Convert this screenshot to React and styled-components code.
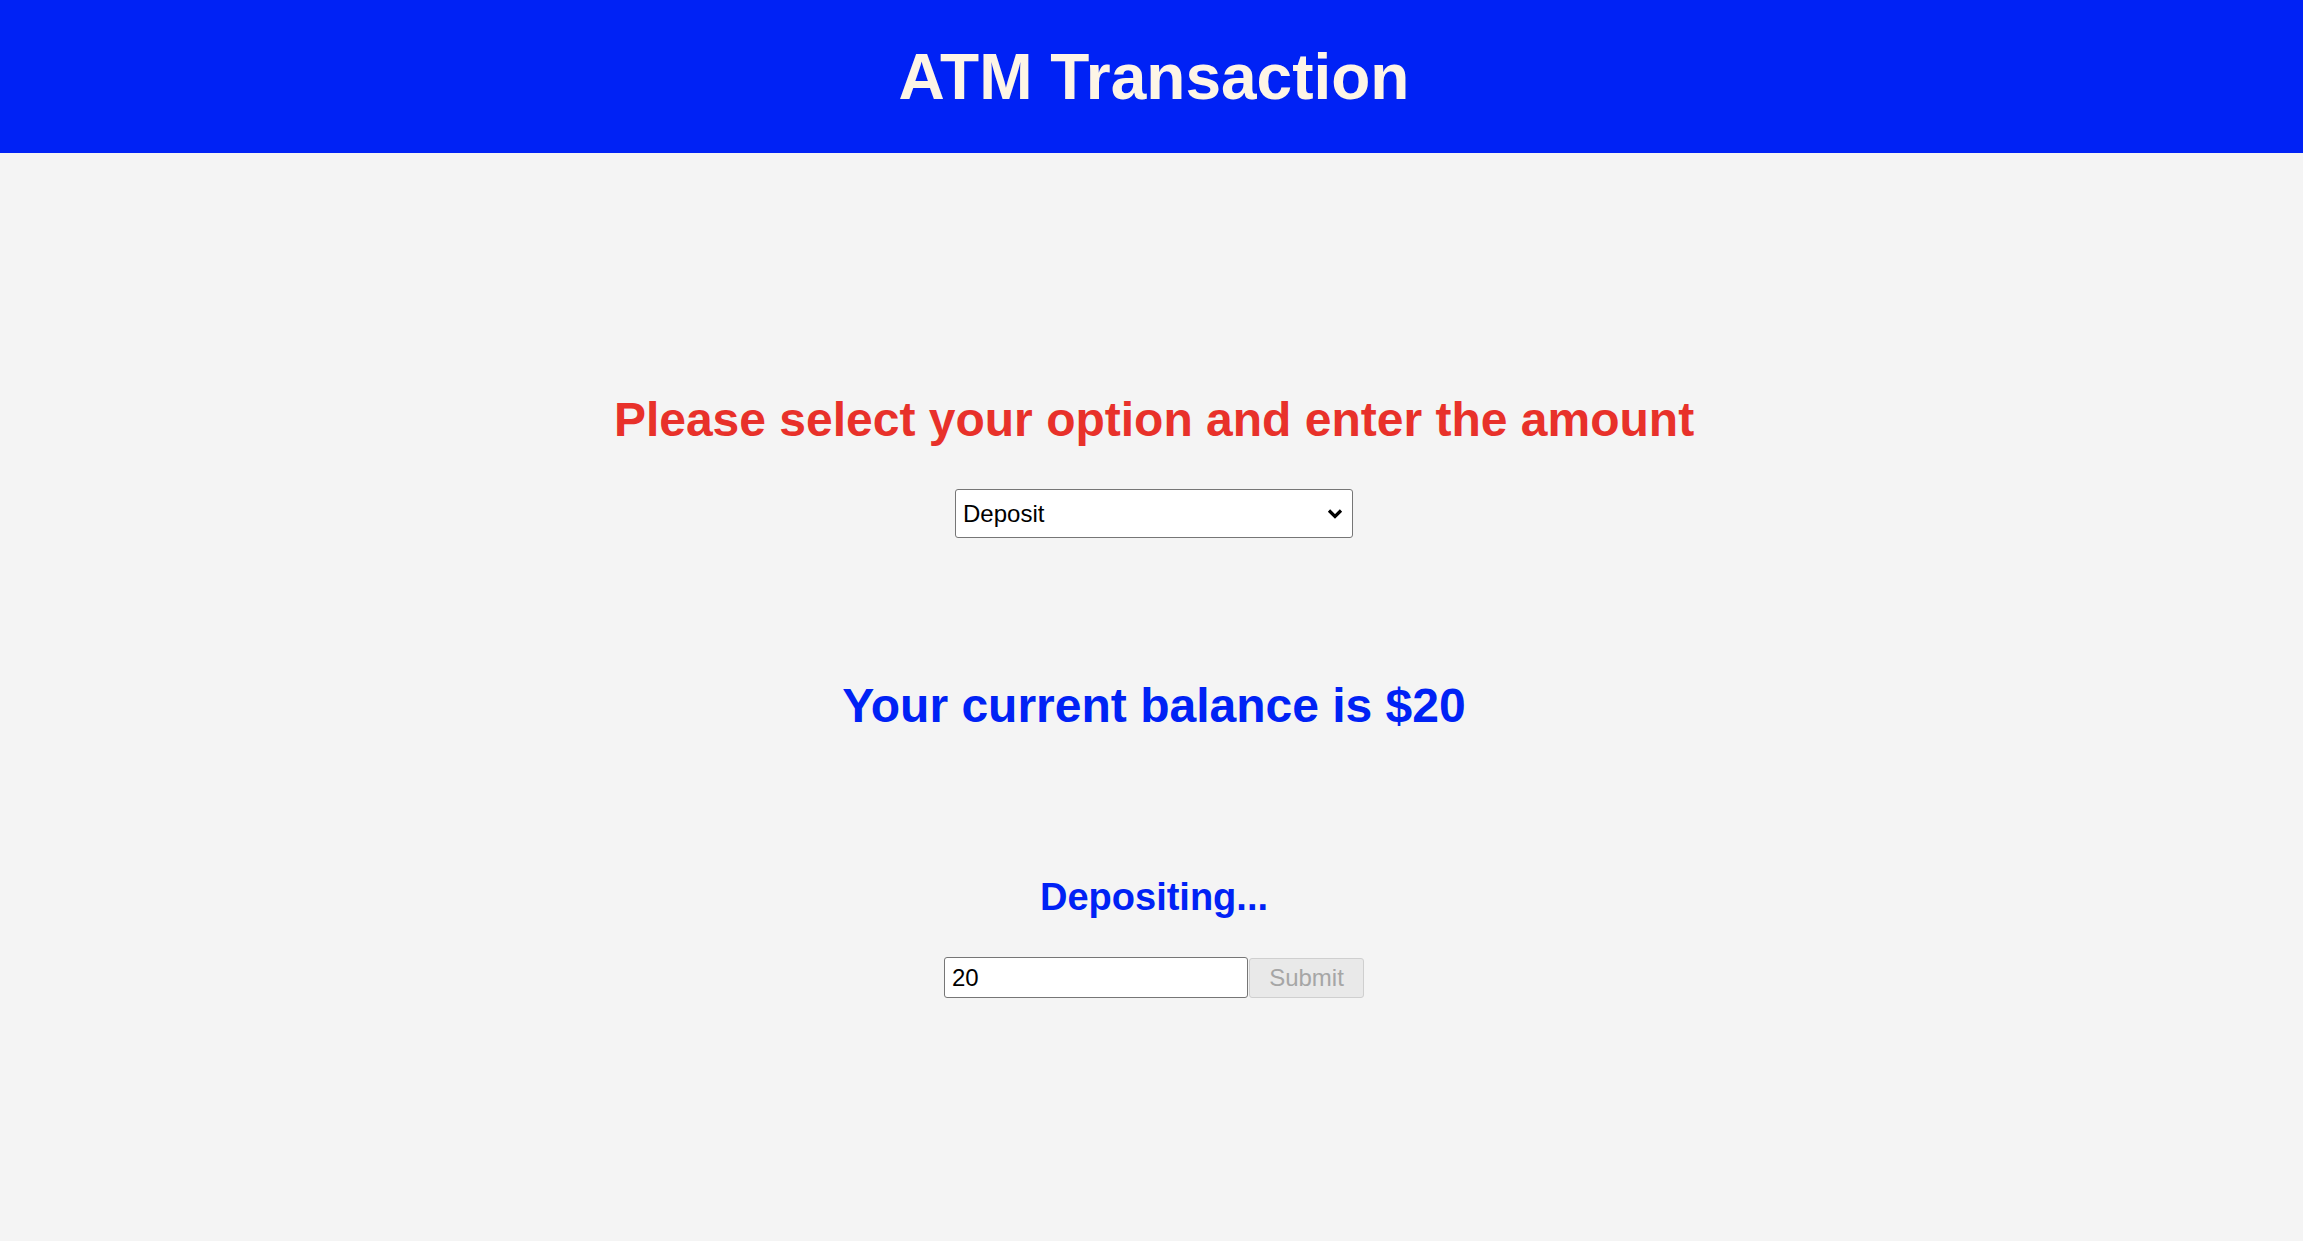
import React from 'react'
import styled, { createGlobalStyle } from 'styled-components'

const GlobalStyle = createGlobalStyle`
  html, body {
    margin: 0;
    padding: 0;
    background: #f4f4f4;
    font-family: "Liberation Sans", Arial, sans-serif;
  }
`

const Page = styled.div`
  min-height: 1241px;
  display: flex;
  flex-direction: column;
  background: #f4f4f4;
`

const Header = styled.header`
  height: 153px;
  padding-left: 5px;
  background: #0022f5;
  display: flex;
  align-items: center;
  justify-content: center;

  h1 {
    margin: 0;
    font-size: 64px;
    line-height: 1;
    font-weight: 700;
    color: #fdf5e6;
  }
`

const Main = styled.main`
  display: flex;
  flex-direction: column;
  align-items: center;
  padding: 243px 0 0 5px;
`

const Heading = styled.h1`
  margin: 0 0 ${p => p.$gap || 0}px;
  font-size: ${p => p.$size || 48}px;
  line-height: 1;
  font-weight: 700;
  color: ${p => p.$color};
`

const SelectWrap = styled.div`
  position: relative;
  width: 398px;
  height: 49px;
  margin-bottom: 144px;

  svg {
    position: absolute;
    right: 10px;
    top: 50%;
    transform: translateY(-50%);
    pointer-events: none;
  }
`

const Select = styled.select`
  box-sizing: border-box;
  width: 100%;
  height: 100%;
  appearance: none;
  -webkit-appearance: none;
  padding: 0 30px 0 7px;
  font-family: "Liberation Sans", Arial, sans-serif;
  font-size: 24px;
  color: #000;
  background: #fff;
  border: 1.5px solid #767676;
  border-radius: 3px;
`

const Row = styled.div`
  display: flex;
  align-items: center;
  gap: 1px;
`

const AmountInput = styled.input`
  box-sizing: border-box;
  width: 304px;
  height: 41px;
  padding: 0 7px;
  font-family: "Liberation Sans", Arial, sans-serif;
  font-size: 24px;
  color: #000;
  background: #fff;
  border: 1.5px solid #767676;
  border-radius: 3px;
  outline: none;
`

const SubmitButton = styled.button`
  box-sizing: border-box;
  width: 115px;
  height: 40px;
  font-family: "Liberation Sans", Arial, sans-serif;
  font-size: 24px;
  color: #a6a6a6;
  background: #e9e9e9;
  border: 1.5px solid #cfcfcf;
  border-radius: 3px;
  padding: 0;
`

export default function App() {
  const [option, setOption] = React.useState('deposit')
  const [amount, setAmount] = React.useState('20')

  return (
    <Page>
      <GlobalStyle />
      <Header>
        <h1>ATM Transaction</h1>
      </Header>
      <Main>
        <Heading $color="#e8312a" $gap={45}>
          Please select your option and enter the amount
        </Heading>
        <SelectWrap>
          <Select value={option} onChange={e => setOption(e.target.value)}>
            <option value="deposit">Deposit</option>
            <option value="withdraw">Withdraw</option>
          </Select>
          <svg width="16" height="11" viewBox="0 0 16 11">
            <path d="M2 2 L8 8 L14 2" fill="none" stroke="#000" strokeWidth="3.2" />
          </svg>
        </SelectWrap>
        <Heading $color="#0022f5" $gap={148}>
          Your current balance is $20
        </Heading>
        <Heading $color="#0022f5" $size={38} $gap={41}>
          Depositing...
        </Heading>
        <Row>
          <AmountInput
            type="text"
            value={amount}
            onChange={e => setAmount(e.target.value)}
          />
          <SubmitButton disabled>Submit</SubmitButton>
        </Row>
      </Main>
    </Page>
  )
}
